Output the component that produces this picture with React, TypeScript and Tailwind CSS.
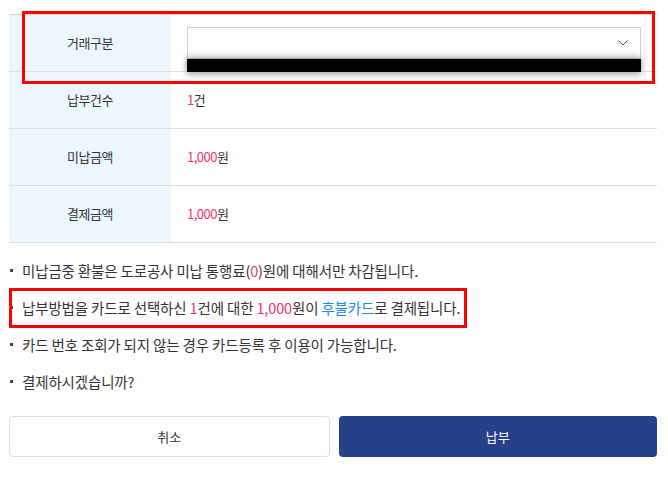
import React from 'react';

const rows = [
  { label: '납부건수', value: <><span className="text-[#f0356b]">1</span>건</> },
  { label: '미납금액', value: <><span className="text-[#f0356b]">1,000</span>원</> },
  { label: '결제금액', value: <><span className="text-[#f0356b]">1,000</span>원</> },
];

const Bullet: React.FC<{ children: React.ReactNode; highlight?: boolean }> = ({ children, highlight }) => (
  <li className="relative flex h-[37px] items-center">
    <span className="ml-[1px] mr-[9px] h-[3px] w-[3px] bg-[#444]" />
    <span>{children}</span>
    {highlight && (
      <div className="pointer-events-none absolute left-0 top-[-1px] h-[40px] w-[458px] border-[3px] border-[#ff0000]" />
    )}
  </li>
);

export default function App() {
  return (
    <div className="h-[480px] w-[668px] bg-white pl-[9px] pr-[11px] pt-[14px] font-['Noto_Sans_CJK_KR',sans-serif] text-[#333]">
      <div className="relative border-t border-[#dcdcdc]">
        <div className="flex h-[57px] border-b border-[#dcdcdc]">
          <div className="flex w-[162px] items-center justify-center bg-[#eef6fd] text-[13px] tracking-[-0.5px]">거래구분</div>
          <div className="flex flex-1 items-center pl-[16px] pr-[16px]">
            <div className="relative flex-1">
              <div className="flex h-[32px] items-center justify-end border border-[#cfcfcf] bg-white pr-[12px]">
                <svg width="10" height="6" viewBox="0 0 10 6" fill="none">
                  <polyline points="0.5,0.5 5,5 9.5,0.5" stroke="#555" strokeWidth="1" />
                </svg>
              </div>
              <div className="absolute left-0 right-0 top-[32px] h-[13px] bg-black shadow-[0_-3px_6px_rgba(0,0,0,0.25),0_3px_6px_rgba(0,0,0,0.3)]" />
            </div>
          </div>
        </div>
        {rows.map((r) => (
          <div key={r.label} className="flex h-[57px] border-b border-[#dcdcdc]">
            <div className="flex w-[162px] items-center justify-center bg-[#eef6fd] text-[13px] tracking-[-0.5px]">{r.label}</div>
            <div className="flex flex-1 items-center pl-[16px] text-[13px] tracking-[-0.5px]">{r.value}</div>
          </div>
        ))}
        <div className="pointer-events-none absolute left-[13px] top-[-4px] h-[73px] w-[633px] border-[3px] border-[#ff0000]" />
      </div>

      <ul className="mt-[9px] text-[14.5px] tracking-[-0.15px]">
        <Bullet>
          미납금중 환불은 도로공사 미납 통행료(<span className="text-[#f0356b]">0</span>)원에 대해서만 차감됩니다.
        </Bullet>
        <Bullet highlight>
          납부방법을 카드로 선택하신 <span className="text-[#f0356b]">1</span>건에 대한{' '}
          <span className="text-[#f0356b]">1,000</span>원이 <span className="text-[#1e88e5]">후불카드</span>로 결제됩니다.
        </Bullet>
        <Bullet>카드 번호 조회가 되지 않는 경우 카드등록 후 이용이 가능합니다.</Bullet>
        <Bullet>결제하시겠습니까?</Bullet>
      </ul>

      <div className="mt-[16px] flex gap-[9px]">
        <button className="flex h-[41px] flex-1 items-center justify-center rounded-[4px] border border-[#dcdcdc] bg-white text-[13px] text-[#333]">
          취소
        </button>
        <button className="flex h-[41px] flex-1 items-center justify-center rounded-[4px] bg-[#26418a] text-[13px] text-white">
          납부
        </button>
      </div>
    </div>
  );
}
